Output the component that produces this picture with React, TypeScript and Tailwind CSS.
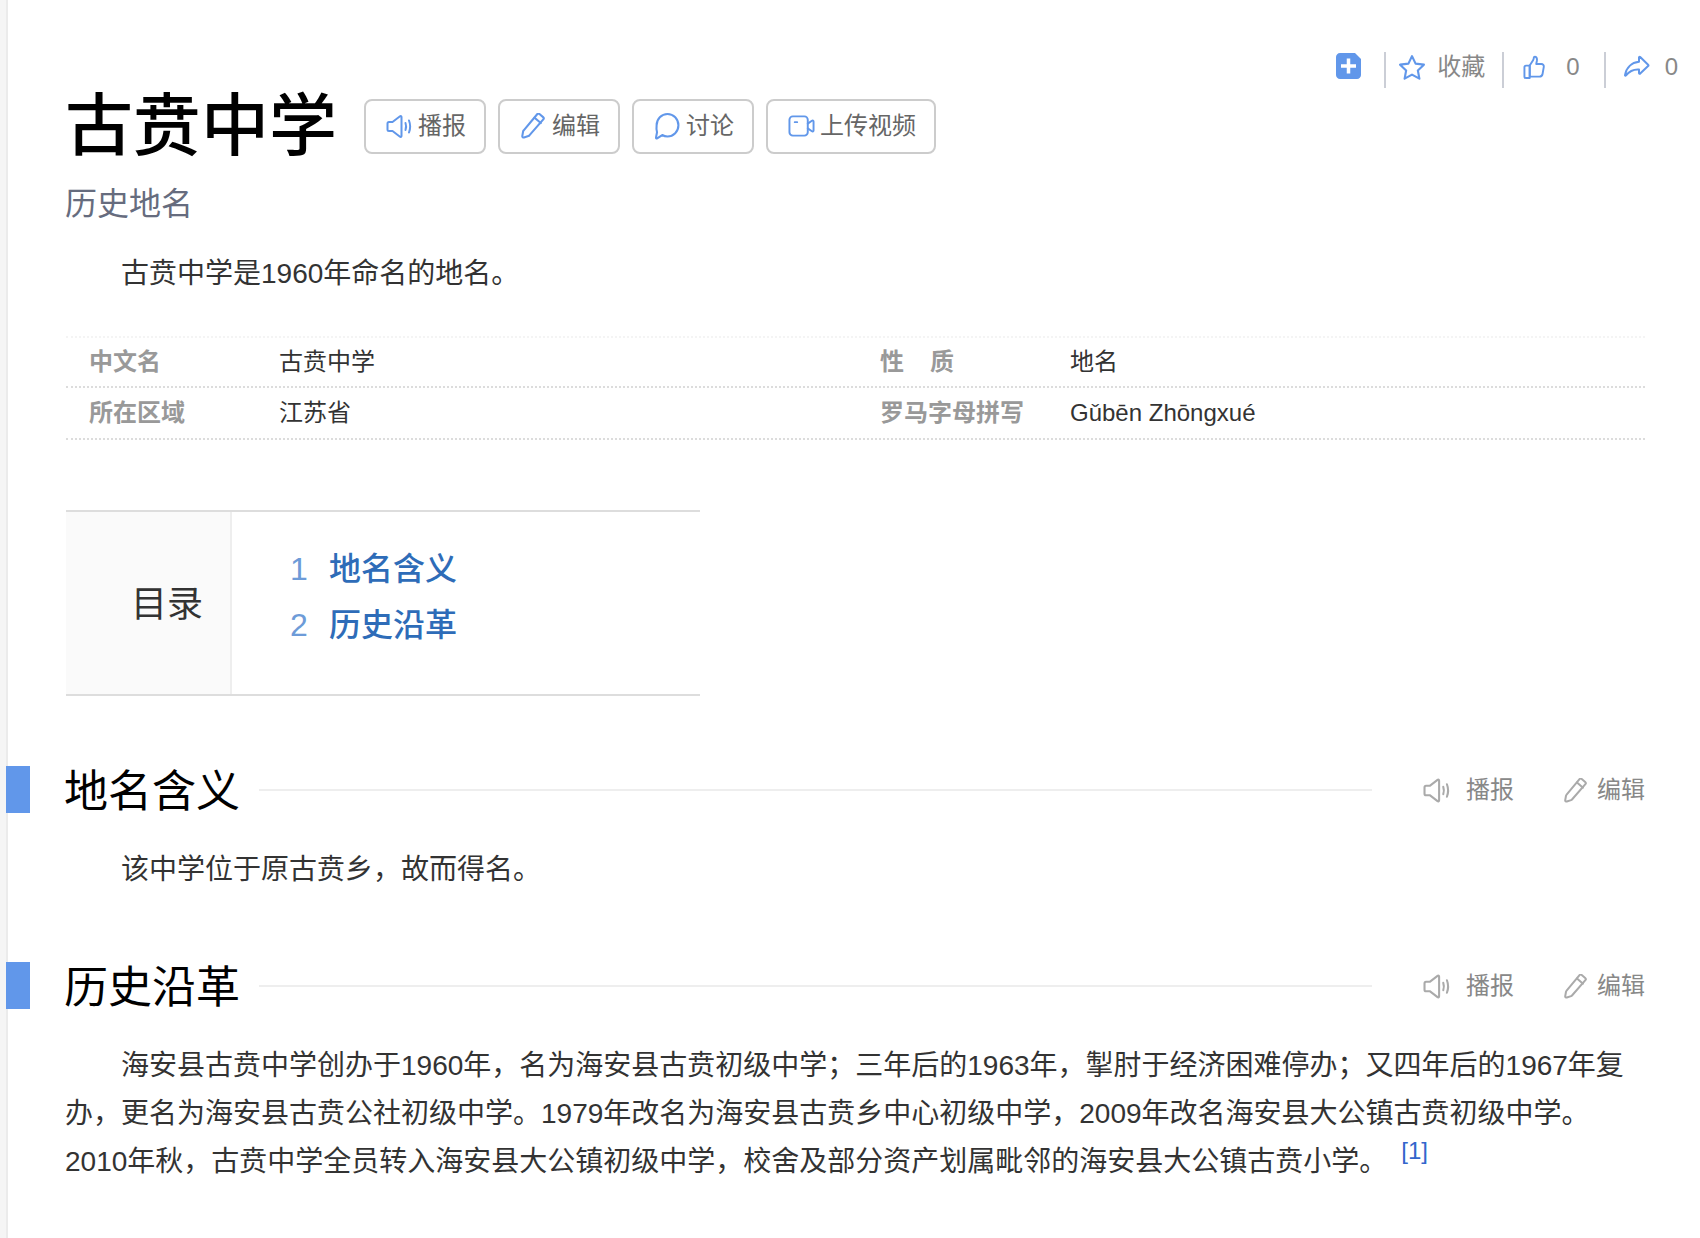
import type { ReactNode } from 'react';

const FONT = { fontFamily: '"Liberation Sans", "Noto Sans CJK SC", sans-serif' };

function SpeakerIcon({ className }: { className: string }) {
  return (
    <svg viewBox="0 0 26 24" fill="none" stroke="currentColor" strokeWidth="2" strokeLinejoin="round" strokeLinecap="round" className={className}>
      <path d="M6.500 7.500L14 1.800c.7-.5 1.500-.1 1.500.8v18.800c0 .9-.8 1.300-1.500.8L6.500 16.500H3c-.9 0-1.500-.6-1.500-1.500V9c0-.9.6-1.500 1.500-1.500z" />
      <path d="M19.500 8.500c.8 2.300.8 4.700 0 7" />
      <path d="M23 6c1.500 3.900 1.500 8.100 0 12" />
    </svg>
  );
}

function PencilIcon({ className }: { className: string }) {
  return (
    <svg viewBox="1 1 23 25" fill="none" stroke="currentColor" strokeWidth="2" strokeLinejoin="round" strokeLinecap="round" className={className}>
      <path d="M16.500 2.200c.6-.7 1.500-.8 2.200-.2l3.500 3c.7.600.8 1.500.2 2.200L9 22.500c-.2.300-.5.500-.9.600l-4.300 1.400c-.9.300-1.700-.4-1.600-1.300l.8-4.500c.1-.3.200-.6.400-.8z" />
      <path d="M14 5.500l6 5.200" />
    </svg>
  );
}

function BubbleIcon({ className }: { className: string }) {
  return (
    <svg viewBox="1 1 24 26" fill="none" stroke="currentColor" strokeWidth="2" strokeLinejoin="round" strokeLinecap="round" className={className}>
      <path d="M13.500 2C19.300 2 24 6.700 24 12.800c0 6-4.700 10.800-10.500 10.800-1.900 0-3.600-.5-5.100-1.400L3.500 25.500c-.6.300-1.200-.1-1.100-.8l1-5.200C2.900 18 2.800 14.500 3 12.800 3 6.700 7.700 2 13.500 2z" />
    </svg>
  );
}

function VideoIcon({ className }: { className: string }) {
  return (
    <svg viewBox="0 0 28 24" fill="none" stroke="currentColor" strokeWidth="2" strokeLinejoin="round" strokeLinecap="round" className={className}>
      <rect x="1.500" y="2" width="19" height="20" rx="3.500" />
      <path d="M20.500 9.500l4.300-3c.8-.5 1.700 0 1.700.9v9.200c0 .9-.9 1.400-1.700.9l-4.300-3" />
      <path d="M7 8h2.500" />
    </svg>
  );
}

function StarIcon({ className }: { className: string }) {
  return (
    <svg viewBox="1 1 24 23" fill="none" stroke="currentColor" strokeWidth="2" strokeLinejoin="round" className={className}>
      <path d="M13 2l3.300 6.900 7.700 1-5.600 5.300 1.400 7.600L13 19.100l-6.800 3.700 1.400-7.600L2 9.900l7.700-1z" />
    </svg>
  );
}

function ThumbIcon({ className }: { className: string }) {
  return (
    <svg viewBox="0 0 24 25" fill="none" stroke="currentColor" strokeWidth="2" strokeLinejoin="round" strokeLinecap="round" className={className}>
      <path d="M7 10.500l3.500-5.500c.5-1 .8-2 .8-3 0-.6 1-1 1.900-.5 1.200.7 1.600 2.400 1.300 4l-.7 3.300h5.400c1.600 0 2.800 1.400 2.500 3l-1.300 7.500c-.3 1.700-1.600 2.700-3.200 2.700H7z" />
      <path d="M7 10.500H3.200c-1 0-1.700.7-1.700 1.700v9.600c0 1 .7 1.700 1.700 1.700H7z" />
    </svg>
  );
}

function ShareIcon({ className }: { className: string }) {
  return (
    <svg viewBox="0 0 27 24" fill="none" stroke="currentColor" strokeWidth="2" strokeLinejoin="round" strokeLinecap="round" className={className}>
      <path d="M16 2.500c0-.6.700-.9 1.200-.5l7.900 7.700c.4.400.4 1 0 1.400l-7.900 7.500c-.5.400-1.200.1-1.200-.5v-3.600c-5-.4-9.400 1.400-13.200 6-.3.400-.9.100-.8-.4C3.300 12.500 8.500 7.500 16 6.800z" />
    </svg>
  );
}

function AddIcon({ className }: { className: string }) {
  return (
    <svg viewBox="0 0 25 26" className={className}>
      <path d="M4 0h15l6 6v16c0 2.200-1.800 4-4 4H4c-2.200 0-4-1.800-4-4V4c0-2.200 1.800-4 4-4z" fill="#6197ea" />
      <path d="M12.500 5.500v15M5 13h15" fill="none" stroke="#ffffff" strokeWidth="3.500" />
    </svg>
  );
}

function ToolButton({ icon, label }: { icon: ReactNode; label: string }) {
  return (
    <button className="flex h-[55px] items-center rounded-lg border-2 border-[#cccccc] bg-white pl-[20px] pr-[18px] text-[24px] text-[#666666]">
      {icon}
      <span className="ml-[6px]">{label}</span>
    </button>
  );
}

function SectionHeading({ title }: { title: string }) {
  return (
    <div className="flex h-[48px] items-center">
      <div className="h-[47px] w-[24px] bg-[#6197ea]" />
      <h2 className="ml-[34px] pt-[6px] text-[44px] leading-[48px] font-normal text-black">{title}</h2>
      <div className="mt-[2px] ml-[19px] h-[2px] flex-1 bg-[#eeeeee]" />
      <div className="mt-[2px] ml-[50px] flex items-center text-[24px] text-[#888888]">
        <SpeakerIcon className="h-[25px] w-[29px] text-[#aaaaaa]" />
        <span className="ml-[15px]">播报</span>
        <PencilIcon className="ml-[49px] h-[25px] w-[25px] text-[#aaaaaa]" />
        <span className="ml-[9px]">编辑</span>
      </div>
    </div>
  );
}

function InfoCell({ label, value }: { label: ReactNode; value: string }) {
  return (
    <div className="flex items-center text-[24px]">
      <div className="w-[213px] pl-[23px] font-bold text-[#999999]">{label}</div>
      <div className="text-[#333333]">{value}</div>
    </div>
  );
}

export default function App() {
  return (
    <div style={FONT} className="min-h-[1238px] border-l-[6px] border-[#f5f5f5] bg-white shadow-[inset_2px_0_0_#ebebeb]">
      <div className="flex h-[88px] items-start justify-end pt-[52px] pr-[22px]">
        <div className="flex h-[36px] items-center text-[24px] text-[#888888]">
          <AddIcon className="mb-[8px] h-[26px] w-[25px]" />
          <div className="ml-[23px] h-[36px] w-[2px] bg-[#cbced6]" />
          <div className="mb-[6px] ml-[13px] flex items-center">
            <StarIcon className="h-[25px] w-[26px] text-[#6197ea]" />
            <span className="ml-[12px]">收藏</span>
          </div>
          <div className="ml-[17px] h-[36px] w-[2px] bg-[#cbced6]" />
          <div className="mb-[6px] ml-[19px] flex items-center">
            <ThumbIcon className="h-[25px] w-[23px] text-[#6197ea]" />
            <span className="ml-[20px]">0</span>
          </div>
          <div className="ml-[24px] h-[36px] w-[2px] bg-[#cbced6]" />
          <div className="mb-[6px] ml-[17px] flex items-center">
            <ShareIcon className="h-[24px] w-[27px] text-[#6197ea]" />
            <span className="ml-[15px]">0</span>
          </div>
        </div>
      </div>

      <div className="pl-[59px] pr-[55px]">
        <div className="flex h-[76px] items-center">
          <h1 className="text-[68px] leading-[76px] font-medium text-black">古贲中学</h1>
          <div className="ml-[27px] flex gap-[12px]">
            <ToolButton icon={<SpeakerIcon className="h-[25px] w-[26px] text-[#6197ea]" />} label="播报" />
            <ToolButton icon={<PencilIcon className="h-[26px] w-[26px] text-[#6197ea]" />} label="编辑" />
            <ToolButton icon={<BubbleIcon className="h-[27px] w-[26px] text-[#6197ea]" />} label="讨论" />
            <ToolButton icon={<VideoIcon className="-mr-[1px] h-[24px] w-[27px] text-[#6197ea]" />} label="上传视频" />
          </div>
        </div>

        <div className="mt-[20px] text-[32px] leading-[40px] text-[#666c7e]">历史地名</div>
        <p className="mt-[26px] indent-[56px] text-[28px] leading-[48px] text-[#333333]">古贲中学是1960年命名的地名。</p>

        <div className="mt-[38px] ml-px border-t-2 border-dotted border-[#f4f4f4]">
          <div className="grid h-[50px] grid-cols-[791px_1fr] items-center border-b-2 border-dotted border-[#dcdcdc]">
            <InfoCell label="中文名" value="古贲中学" />
            <InfoCell label={<>性<span className="ml-[26px]">质</span></>} value="地名" />
          </div>
          <div className="grid h-[52px] grid-cols-[791px_1fr] items-center border-b-2 border-dotted border-[#dcdcdc]">
            <InfoCell label="所在区域" value="江苏省" />
            <InfoCell label="罗马字母拼写" value="Gǔbēn Zhōngxué" />
          </div>
        </div>

        <div className="mt-[70px] ml-px flex h-[186px] w-[634px] border-y-2 border-[#dddddd]">
          <div className="flex w-[166px] items-center justify-end border-r-2 border-[#eeeeee] bg-[#fafafa] pt-[4px] pr-[27px] text-[36px] text-[#333333]">目录</div>
          <div className="pt-[29px] pl-[58px] text-[32px] leading-[56px]">
            <div className="flex">
              <span className="w-[39px] text-[#6d9bd8]">1</span>
              <span className="font-medium text-[#2e6cb8]">地名含义</span>
            </div>
            <div className="flex">
              <span className="w-[39px] text-[#6d9bd8]">2</span>
              <span className="font-medium text-[#2e6cb8]">历史沿革</span>
            </div>
          </div>
        </div>
      </div>

      <div className="mt-[69px] pr-[55px]">
        <SectionHeading title="地名含义" />
        <p className="mt-[33px] pl-[59px] indent-[56px] text-[28px] leading-[48px] text-[#333333]">该中学位于原古贲乡，故而得名。</p>
      </div>

      <div className="mt-[67px] pr-[55px]">
        <SectionHeading title="历史沿革" />
        <p className="mt-[33px] pl-[59px] indent-[56px] text-[28px] leading-[48px] text-[#333333]">
          海安县古贲中学创办于1960年，名为海安县古贲初级中学；三年后的1963年，掣肘于经济困难停办；又四年后的1967年复办，更名为海安县古贲公社初级中学。1979年改名为海安县古贲乡中心初级中学，2009年改名海安县大公镇古贲初级中学。2010年秋，古贲中学全员转入海安县大公镇初级中学，校舍及部分资产划属毗邻的海安县大公镇古贲小学。
          <sup className="ml-[14px] text-[24px] leading-none text-[#3366cc]">[1]</sup>
        </p>
      </div>
    </div>
  );
}
